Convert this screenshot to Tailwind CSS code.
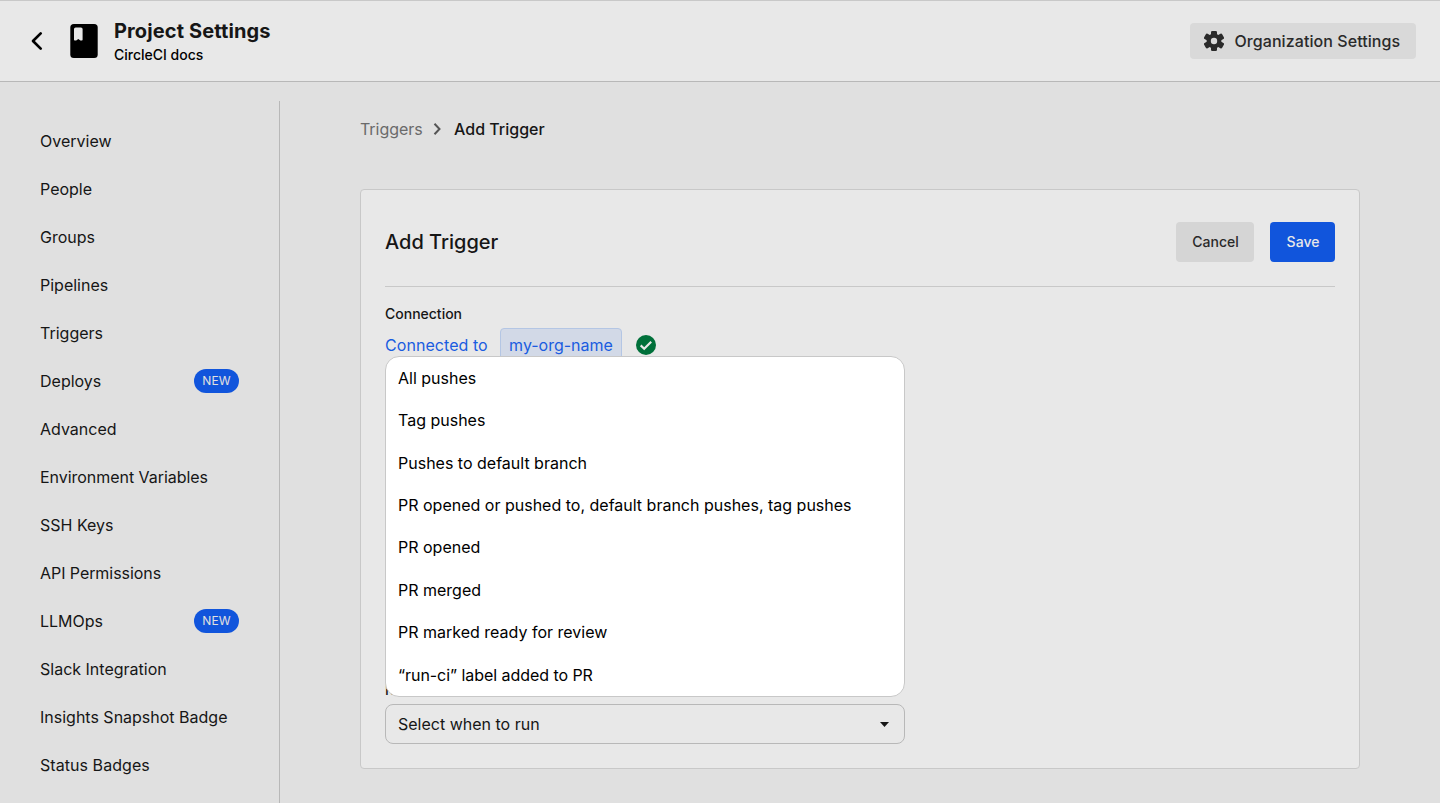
<!DOCTYPE html>
<html lang="en">
<head>
<meta charset="utf-8">
<title>Project Settings</title>
<script src="https://cdn.jsdelivr.net/npm/@tailwindcss/browser@4"></script>
</head>
<body class="h-[803px] overflow-hidden bg-[#e0e0e0] font-['Inter',sans-serif] text-base text-[#161616] flex flex-col">
<header class="h-[82px] shrink-0 border-t border-b border-t-[#c8c8c8] border-b-[#b8b8b8] bg-[#e8e8e8] flex items-center pl-[30px] pr-6">
  <svg class="w-[14px] h-5 shrink-0" viewBox="0 0 14 20" fill="none" stroke="#000" stroke-width="2.7" stroke-linecap="round" stroke-linejoin="round"><path d="M10.7 2.4 3 10l7.700 7.600"/></svg>
  <svg class="w-7 h-[34px] ml-[26px] shrink-0" viewBox="0 0 28 34"><rect x=".3" y="0" width="27.400" height="34" rx="3.500" fill="#000"/><path d="M5.700 3.400h5.200a1.700 1.700 0 0 1 1.700 1.700v10.700q0 .7-.7.700h-1.500L8.300 15l-2.100 1.500H4.700q-.7 0-.7-.7V5.100a1.700 1.700 0 0 1 1.700-1.700z" fill="#e8e8e8"/></svg>
  <div class="ml-4 pt-[3px]">
    <h1 class="text-xl leading-6 font-bold tracking-[0.12px]">Project Settings</h1>
    <p class="text-sm leading-[22px] font-medium text-black mt-px">CircleCI docs</p>
  </div>
  <button class="ml-auto h-9 w-[226px] rounded bg-[#d9d9d9] flex items-center pl-[14px] font-medium text-[#2a2a2a]">
    <svg class="w-5 h-5 mr-[10.500px]" viewBox="0 0 20 20" fill="#2a2a2a"><circle cx="10" cy="10" r="7.400"/><rect x="7" y="0" width="6" height="20" rx="1.300"/><rect x="7" y="-.4" width="6" height="20.800" rx="1.300" transform="rotate(60 10 10)"/><rect x="7" y="-.4" width="6" height="20.800" rx="1.300" transform="rotate(120 10 10)"/><circle cx="10" cy="10" r="3.200" fill="#d9d9d9"/></svg>
    <span class="whitespace-nowrap tracking-[0.07px]">Organization Settings</span>
  </button>
</header>
<div class="flex flex-1 min-h-0">
  <nav class="mt-[19px] w-[280px] shrink-0 border-r border-[#b8b8b8] pl-10 pr-10 pt-4">
    <ul>
      <li class="h-12 flex items-center">Overview</li>
      <li class="h-12 flex items-center">People</li>
      <li class="h-12 flex items-center">Groups</li>
      <li class="h-12 flex items-center">Pipelines</li>
      <li class="h-12 flex items-center">Triggers</li>
      <li class="h-12 flex items-center justify-between">Deploys <span class="w-[45px] h-6 rounded-full bg-[#1155dc] text-[#e0e0e0] text-xs flex items-center justify-center tracking-[0.2px]">NEW</span></li>
      <li class="h-12 flex items-center">Advanced</li>
      <li class="h-12 flex items-center tracking-[-0.04px]">Environment Variables</li>
      <li class="h-12 flex items-center">SSH Keys</li>
      <li class="h-12 flex items-center tracking-[-0.06px]">API Permissions</li>
      <li class="h-12 flex items-center justify-between">LLMOps <span class="w-[45px] h-6 rounded-full bg-[#1155dc] text-[#e0e0e0] text-xs flex items-center justify-center tracking-[0.2px]">NEW</span></li>
      <li class="h-12 flex items-center">Slack Integration</li>
      <li class="h-12 flex items-center">Insights Snapshot Badge</li>
      <li class="h-12 flex items-center tracking-[0.06px]">Status Badges</li>
    </ul>
  </nav>
  <main class="flex-1 pl-20 pr-20 pt-[35px]">
    <div class="h-6 flex items-center">
      <span class="text-[#6a6a6a] tracking-[-0.06px]">Triggers</span>
      <svg class="w-[9px] h-[14px] ml-[10.500px] mr-3" viewBox="0 0 9 14" fill="none" stroke="#555" stroke-width="2"><path d="m1.500 1.700 5 5.300-5 5.300"/></svg>
      <span class="font-medium">Add Trigger</span>
    </div>
    <section class="mt-12 h-[580px] border border-[#c8c8c8] rounded bg-[#e8e8e8] px-6 pt-8">
      <div class="flex items-center h-10">
        <h2 class="text-xl font-medium">Add Trigger</h2>
        <button class="ml-auto w-[78px] h-10 rounded bg-[#d5d5d5] text-[#2a2a2a] text-sm font-medium pl-px">Cancel</button>
        <button class="ml-4 w-[65px] h-10 rounded bg-[#1155dc] text-[#e8e8e8] text-sm font-medium pl-px">Save</button>
      </div>
      <hr class="mt-6 border-[#c8c8c8]">
      <h3 class="mt-[17px] text-sm font-medium">Connection</h3>
      <div class="mt-1 h-[34px] flex items-center text-[#1a5ce0]">
        <span class="w-[103px] whitespace-nowrap tracking-[0.06px]">Connected to</span>
        <span class="ml-3 w-[122px] h-[34px] rounded border border-[#b4c6e4] bg-[#d2d9e7] flex items-center justify-center">my-org-name</span>
        <svg class="ml-[14px] w-5 h-5" viewBox="0 0 20 20"><circle cx="10" cy="10" r="10" fill="#00703a"/><path d="m4.700 10.400 3.500 3.400 7-7" fill="none" stroke="#e8e8e8" stroke-width="2.200"/></svg>
      </div>
      <div class="relative mt-[318px] w-[520px]">
        <h3 class="text-sm font-medium h-5">Run on</h3>
        <div class="mt-1 h-10 rounded-lg border border-[#b8b8b8] flex items-center justify-between pl-3 pr-[15.500px]">
          <span>Select when to run</span>
          <svg class="w-[9px] h-[5px]" viewBox="0 0 9 5"><path d="M0 0h9L4.500 5z" fill="#161616"/></svg>
        </div>
        <ul class="absolute left-0 bottom-[47px] w-[520px] h-[341px] rounded-[14px] border border-[#c8c8c8] bg-white text-black pl-3 flex flex-col">
          <li class="h-[42px] flex items-center">All pushes</li>
          <li class="h-[42px] flex items-center">Tag pushes</li>
          <li class="h-[43px] flex items-center">Pushes to default branch</li>
          <li class="h-[42px] flex items-center">PR opened or pushed to, default branch pushes, tag pushes</li>
          <li class="h-[42px] flex items-center">PR opened</li>
          <li class="h-[43px] flex items-center">PR merged</li>
          <li class="h-[42px] flex items-center">PR marked ready for review</li>
          <li class="h-[43px] flex items-center tracking-[-0.05px]">“run-ci” label added to PR</li>
        </ul>
      </div>
    </section>
  </main>
</div>
</body>
</html>
